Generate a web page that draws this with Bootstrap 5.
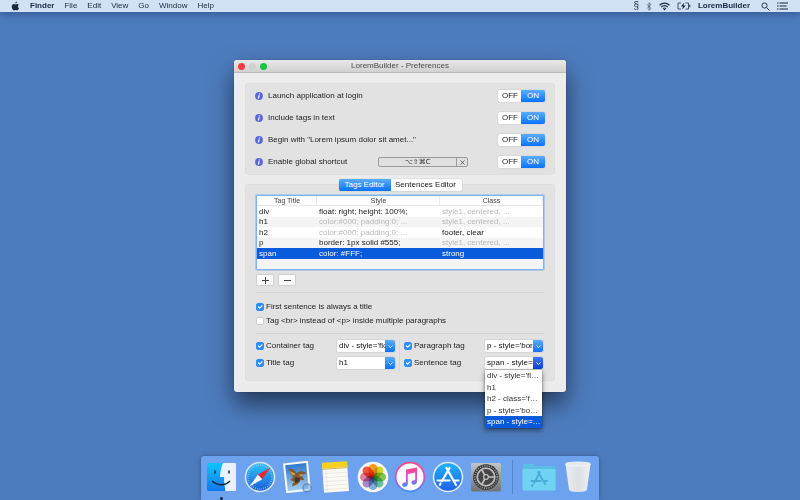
<!DOCTYPE html>
<html lang="en">
<head>
<meta charset="utf-8">
<meta name="viewport" content="width=device-width, initial-scale=1">
<title>LoremBuilder - Preferences</title>
<link rel="stylesheet" href="https://cdn.jsdelivr.net/npm/bootstrap@5.3.0/dist/css/bootstrap.min.css">
<style>
:root { --ink: #1c1c1c; --accent: #1a84fc; --pick: #0a5bdb; }
body { background: #4d7cbe; color: var(--ink); font-family: "Liberation Sans", Arial, sans-serif; font-size: 8px; line-height: 12px; }
.menubar { background: #d3e1f7; height: 12px; padding: 0 12px 0 11px; color: #1b2740; box-shadow: 0 1px 10px rgba(20,45,95,.55); }
.menubar a { color: inherit; text-decoration: none; }
.menus { gap: 10px; }
.status { gap: 7px; }
.section-mark { font-size: 10px; }
svg { display: block; flex: none; }

.prefs { max-width: 332px; margin-top: 48px; background: #ececec; border-radius: 3px; box-shadow: 0 12px 24px rgba(0,0,0,.55), 0 0 1px rgba(0,0,0,.5); }
.titlebar { display: grid; grid-template-columns: 1fr auto 1fr; align-items: center; height: 13px; padding: 0 4px; background: linear-gradient(#e8e8e8, #d1d1d1); border-bottom: 1px solid #b9b9b9; border-radius: 3px 3px 0 0; color: #4a4a4a; }
.light { width: 7px; height: 7px; border: 0; padding: 0; border-radius: 50%; }
.light-close { background: #fc3b47; }
.light-min { background: #d0d0d0; }
.light-zoom { background: #12ca40; }
.prefs-body { padding: 10px 11px 11px; }
.panel { background: #e2e2e2; border: 1px solid #dedede; border-radius: 3px; }
.options { padding: 1px 9px; }
.option { height: 22px; gap: 5px; }
.option-name { width: 105px; }

.seg { border-radius: 2px; box-shadow: 0 0 1px rgba(0,0,0,.45); }
.seg .btn { --bs-btn-font-size: 8px; --bs-btn-line-height: 12px; --bs-btn-padding-x: 0; --bs-btn-padding-y: 0; --bs-btn-border-width: 0; --bs-btn-border-radius: 2px; background: #fff; color: #222; text-align: center; }
.seg .btn-check:checked + .btn { background: linear-gradient(#5aaefc, #0b72ff); color: #fff; }
.seg-switch .btn { width: 24px; }
.tabs { margin-top: -6px; }
.tab-a { width: 52px; }
.tab-b { width: 72px; }

.shortcut { width: 90px; height: 10px; border: 1px solid #9b9b9b; border-radius: 2px; background: #e0e0e0; overflow: hidden; }
.shortcut input { min-width: 0; border: 0; padding: 0; background: none; text-align: center; font: 7px/8px "DejaVu Sans", sans-serif; color: #333; }
.shortcut button { width: 13px; border: 0; border-left: 1px solid #9b9b9b; padding: 0; background: none; display: grid; place-items: center; }

.editor { margin-top: 9px; padding: 0 10px 6px; }
.grid-box { margin-top: 4px; border: 1px solid #7fb3ee; border-radius: 1px; background: #f4f4f4; padding-bottom: 10px; box-shadow: 0 0 0 1px rgba(127,179,238,.5); }
.tags { width: 100%; table-layout: fixed; margin: 0; line-height: 10px; }
.tags th, .tags td { height: 10px; padding: 0 2px; border: 0; white-space: nowrap; overflow: hidden; }
.tags th { font-size: 7px; font-weight: 400; text-align: center; color: #444; background: #fff; box-shadow: inset -1px 0 #ececec, inset 0 -1px #e6e6e6; }
.tags tr:nth-child(odd) td { height: 11px; background: #fff; }
.tags tr:nth-child(even) td { background: #f4f4f4; }
.tags .hint { color: #b9b9b9; }
.tags tr.picked td { background: var(--pick); color: #fff; }
.c1 { width: 21%; }
.c2 { width: 43%; }

.tool { width: 18px; height: 12px; padding: 0; border: 1px solid #cfcfcf; border-radius: 1px; background: #fbfbfb; display: grid; place-items: center; }
.rule { height: 1px; background: #d3d3d3; }
.rule-a { margin: 6px 0 7px; }
.rule-b { margin-top: 5px; }
.line { height: 14px; }
.tick { gap: 2px; min-height: 0; padding: 0; margin: 0; }
.tick .form-check-input { float: none; flex: none; width: 8px; height: 8px; margin: 0; border: 1px solid #cfcfcf; border-radius: 2px; background-color: #fff; }
.tick .form-check-input:checked { background-color: #2c8ffb; border-color: #2c8ffb; background-size: 8px 8px; }
.pairs { gap: 9px; margin-top: 6px; padding-right: 1px; }
.pair-col { flex: 1 1 0; min-width: 0; }
.pair { height: 17px; }
.pair-col + .pair-col { position: relative; }
.pair-col + .pair-col::before { content: ""; position: absolute; left: -5px; top: 0; bottom: 2px; width: 1px; background: #d6d6d6; }
.combo { width: 58px; height: 12px; background: #fff; box-shadow: 0 0 1px rgba(0,0,0,.5); border-radius: 1px; position: relative; }
.combo select { appearance: none; width: 100%; height: 12px; border: 0; padding: 0 10px 0 2px; background: none; color: #111; font-size: 8px; line-height: 12px; text-overflow: clip; }
.combo .cap { position: absolute; right: 0; top: 0; width: 10px; height: 12px; display: grid; place-items: center; border-radius: 0 2px 2px 0; background: linear-gradient(#5aaefc, #0b72ff); pointer-events: none; }
.combo.is-open .cap { background: linear-gradient(#3d78f0, #0a45cf); }
.choices { position: absolute; z-index: 5; top: 13px; left: 0; right: 1px; background: #fff; box-shadow: 0 2px 5px rgba(0,0,0,.5), 0 0 1px rgba(0,0,0,.5); }
.choices button { height: 12px; padding: 0 2px; border: 0; background: #fff; color: #333; line-height: 12px; overflow: hidden; text-overflow: clip; white-space: nowrap; }
.choices button:nth-child(even) { height: 11px; line-height: 11px; }
.choices button.picked { background: var(--pick); color: #fff; }

.dock { max-width: 398px; height: 44px; padding: 0 5px 3px; background: #6da3ee; border-radius: 3px 3px 0 0; box-shadow: 0 0 4px rgba(30,60,110,.6); }
.dock a { position: relative; }
.dock .running::after { content: ""; position: absolute; left: 50%; bottom: -7px; width: 3px; height: 3px; margin-left: -2px; border-radius: 50%; background: #14233d; }
.dock-split { width: 1px; height: 34px; margin: 0 4px; background: #5586cc; }
.petals rect { mix-blend-mode: multiply; }
</style>
</head>
<body class="d-flex flex-column min-vh-100 overflow-x-hidden">

<header class="menubar d-flex justify-content-between align-items-center">
  <nav class="menus d-flex align-items-center" aria-label="Application menu">
    <a href="#" aria-label="System"><svg width="9" height="10" viewBox="0 0 18 20"><path fill="#1b2740" d="M12 1c0 2-1.500 4-3.500 4C8.300 3 10 1.200 12 1zM16 14.500c-1 2.500-2.300 4.500-4 4.500-1.200 0-1.600-.8-3-.8s-1.900.8-3 .8C3.500 19 1.500 14.500 1.500 11.200 1.500 8 3.500 6 5.800 6c1.300 0 2.300.8 3.200.8C9.800 6.800 11 6 12.600 6c1.200 0 2.400.6 3.100 1.700-2.700 1.600-2.300 5.700.3 6.800z"/></svg></a>
    <a href="#" class="fw-bold">Finder</a>
    <a href="#">File</a>
    <a href="#">Edit</a>
    <a href="#">View</a>
    <a href="#">Go</a>
    <a href="#">Window</a>
    <a href="#">Help</a>
  </nav>
  <div class="status d-flex align-items-center">
    <span class="section-mark">§</span>
    <svg width="6" height="9" viewBox="0 0 12 18" fill="none" stroke="#46536b" stroke-width="1.500"><path d="M2 5l8 8-4 3.500V1.500L10 5l-8 8"/></svg>
    <svg width="11" height="9" viewBox="0 0 22 18" fill="none" stroke="#1b2740" stroke-width="2.200"><path d="M1 6.500Q11-2 21 6.500M4.500 10Q11 4.500 17.500 10M8 13.200q3-2.500 6 0"/><path fill="#1b2740" stroke="none" d="M8.800 14.200h4.400L11 17z"/></svg>
    <svg width="14" height="8" viewBox="0 0 28 16" fill="none" stroke="#1b2740" stroke-width="1.500"><path d="M8 2H2v12h6M17 2h6v12h-6"/><path d="M25.500 5.500v5" stroke-width="2"/><path fill="#1b2740" stroke="none" d="M14.500 1L8 9h4l-1.500 6L17.500 7h-4.200z"/></svg>
    <a href="#" class="fw-bold">LoremBuilder</a>
    <svg class="ms-1" width="9" height="9" viewBox="0 0 18 18" fill="none" stroke="#1b2740" stroke-width="1.800"><circle cx="7" cy="7" r="5.200"/><path d="M11 11l6 6"/></svg>
    <svg width="11" height="8" viewBox="0 0 22 16" fill="none" stroke="#1b2740" stroke-width="2.200"><path d="M0 2h3M5 2h17M0 8h3M5 8h14M0 14h3M5 14h17"/></svg>
  </div>
</header>

<main class="flex-grow-1 d-flex flex-column align-items-center">
  <section class="prefs w-100" aria-label="Preferences">
    <div class="titlebar">
      <div class="d-flex gap-1">
        <button class="light light-close" type="button" aria-label="Close"></button>
        <button class="light light-min" type="button" aria-label="Minimize"></button>
        <button class="light light-zoom" type="button" aria-label="Zoom"></button>
      </div>
      <span>LoremBuilder - Preferences</span>
    </div>
    <div class="prefs-body">
      <div class="panel options">
        <div class="option d-flex align-items-center">
          <svg width="8" height="8" viewBox="0 0 16 16"><use href="#info"/></svg>
          <span class="option-name" id="o1">Launch application at login</span>
          <div class="seg seg-switch btn-group ms-auto" role="group" aria-labelledby="o1">
            <input class="btn-check" type="radio" name="login" id="login-off"><label class="btn" for="login-off">OFF</label>
            <input class="btn-check" type="radio" name="login" id="login-on" checked><label class="btn" for="login-on">ON</label>
          </div>
        </div>
        <div class="option d-flex align-items-center">
          <svg width="8" height="8" viewBox="0 0 16 16"><use href="#info"/></svg>
          <span class="option-name" id="o2">Include tags in text</span>
          <div class="seg seg-switch btn-group ms-auto" role="group" aria-labelledby="o2">
            <input class="btn-check" type="radio" name="tags" id="tags-off"><label class="btn" for="tags-off">OFF</label>
            <input class="btn-check" type="radio" name="tags" id="tags-on" checked><label class="btn" for="tags-on">ON</label>
          </div>
        </div>
        <div class="option d-flex align-items-center">
          <svg width="8" height="8" viewBox="0 0 16 16"><use href="#info"/></svg>
          <span class="text-nowrap" id="o3">Begin with "Lorem ipsum dolor sit amet..."</span>
          <div class="seg seg-switch btn-group ms-auto" role="group" aria-labelledby="o3">
            <input class="btn-check" type="radio" name="begin" id="begin-off"><label class="btn" for="begin-off">OFF</label>
            <input class="btn-check" type="radio" name="begin" id="begin-on" checked><label class="btn" for="begin-on">ON</label>
          </div>
        </div>
        <div class="option d-flex align-items-center">
          <svg width="8" height="8" viewBox="0 0 16 16"><use href="#info"/></svg>
          <label class="option-name" id="o4" for="keys">Enable global shortcut</label>
          <div class="shortcut d-flex">
            <input class="flex-grow-1" id="keys" type="text" value="⌥⇧⌘C">
            <button type="button" aria-label="Clear shortcut"><svg width="5" height="5" viewBox="0 0 10 10" stroke="#444" stroke-width="1.600"><path d="M1 1l8 8M9 1L1 9"/></svg></button>
          </div>
          <div class="seg seg-switch btn-group ms-auto" role="group" aria-labelledby="o4">
            <input class="btn-check" type="radio" name="short" id="short-off"><label class="btn" for="short-off">OFF</label>
            <input class="btn-check" type="radio" name="short" id="short-on" checked><label class="btn" for="short-on">ON</label>
          </div>
        </div>
      </div>

      <div class="panel editor">
        <div class="tabs d-flex justify-content-center">
          <div class="seg btn-group" role="group" aria-label="Editor">
            <input class="btn-check" type="radio" name="ed" id="ed-tags" checked><label class="btn tab-a" for="ed-tags">Tags Editor</label>
            <input class="btn-check" type="radio" name="ed" id="ed-sent"><label class="btn tab-b" for="ed-sent">Sentences Editor</label>
          </div>
        </div>
        <div class="grid-box">
          <table class="tags">
            <colgroup><col class="c1"><col class="c2"><col></colgroup>
            <thead><tr><th>Tag Title</th><th>Style</th><th>Class</th></tr></thead>
            <tbody>
              <tr><td>div</td><td>float: right; height: 100%;</td><td class="hint">style1, centered, ...</td></tr>
              <tr><td>h1</td><td class="hint">color:#000; padding:0; ...</td><td class="hint">style1, centered, ...</td></tr>
              <tr><td>h2</td><td class="hint">color:#000; padding:0; ...</td><td>footer, clear</td></tr>
              <tr><td>p</td><td>border: 1px solid #555;</td><td class="hint">style1, centered, ...</td></tr>
              <tr class="picked"><td>span</td><td>color: #FFF;</td><td>strong</td></tr>
            </tbody>
          </table>
        </div>
        <div class="d-flex gap-1 mt-1">
          <button class="tool" type="button" aria-label="Add tag"><svg width="7" height="7" viewBox="0 0 7 7" stroke="#444"><path d="M0 3.500h7M3.500 0v7"/></svg></button>
          <button class="tool" type="button" aria-label="Remove tag"><svg width="7" height="7" viewBox="0 0 7 7" stroke="#444"><path d="M0 3.500h7"/></svg></button>
        </div>
        <div class="rule rule-a"></div>
        <div class="line tick form-check d-flex align-items-center"><input class="form-check-input" type="checkbox" id="first" checked><label for="first">First sentence is always a title</label></div>
        <div class="line tick form-check d-flex align-items-center"><input class="form-check-input" type="checkbox" id="br"><label for="br">Tag &lt;br&gt; instead of &lt;p&gt; inside multiple paragraphs</label></div>
        <div class="rule rule-b"></div>
        <div class="pairs d-flex">
          <div class="pair-col">
            <div class="pair d-flex align-items-start justify-content-between">
              <div class="tick form-check d-flex align-items-center"><input class="form-check-input" type="checkbox" id="cont" checked><label for="cont">Container tag</label></div>
              <div class="combo"><select aria-label="Container tag value"><option>div - style='float: right; height: 100%;'</option></select><span class="cap"><svg width="5" height="3" viewBox="0 0 5 3"><use href="#chev"/></svg></span></div>
            </div>
            <div class="pair d-flex align-items-start justify-content-between">
              <div class="tick form-check d-flex align-items-center"><input class="form-check-input" type="checkbox" id="titl" checked><label for="titl">Title tag</label></div>
              <div class="combo"><select aria-label="Title tag value"><option>h1</option></select><span class="cap"><svg width="5" height="3" viewBox="0 0 5 3"><use href="#chev"/></svg></span></div>
            </div>
          </div>
          <div class="pair-col">
            <div class="pair d-flex align-items-start justify-content-between">
              <div class="tick form-check d-flex align-items-center"><input class="form-check-input" type="checkbox" id="para" checked><label for="para">Paragraph tag</label></div>
              <div class="combo"><select aria-label="Paragraph tag value"><option>p - style='border: 1px solid #555;'</option></select><span class="cap"><svg width="5" height="3" viewBox="0 0 5 3"><use href="#chev"/></svg></span></div>
            </div>
            <div class="pair d-flex align-items-start justify-content-between">
              <div class="tick form-check d-flex align-items-center"><input class="form-check-input" type="checkbox" id="sent" checked><label for="sent">Sentence tag</label></div>
              <div class="combo is-open"><select aria-label="Sentence tag value"><option>span - style='color: #FFF;'</option></select><span class="cap"><svg width="5" height="3" viewBox="0 0 5 3"><use href="#chev"/></svg></span>
                <div class="choices d-flex flex-column">
                  <button class="text-start" type="button">div - style='fl…</button>
                  <button class="text-start" type="button">h1</button>
                  <button class="text-start" type="button">h2 - class='f…</button>
                  <button class="text-start" type="button">p - style='bo…</button>
                  <button class="text-start picked" type="button">span - style=…</button>
                </div>
              </div>
            </div>
          </div>
        </div>
      </div>
    </div>
  </section>
</main>

<footer class="d-flex justify-content-center">
  <nav class="dock w-100 d-flex align-items-center justify-content-between" aria-label="Dock">
    <a class="running" href="#" aria-label="Finder"><svg width="32" height="32" viewBox="0 0 32 32"><defs><linearGradient id="f1" x2="0" y2="1"><stop stop-color="#10c5fb"/><stop offset="1" stop-color="#1278ee"/></linearGradient></defs><rect x="1" y="2" width="29" height="28" rx="1" fill="#e9f1fa"/><path fill="url(#f1)" d="M2 2h15c-2 5-3 9-3 14h4c0 5 .5 9 1.500 14H2a1 1 0 0 1-1-1V3a1 1 0 0 1 1-1z"/><path d="M9 9.500v3M23 9.500v3" stroke="#123" stroke-width="1.500"/><path d="M6 20c6 5 13 5 18 0" fill="none" stroke="#123" stroke-width="1.300"/></svg></a>
    <a href="#" aria-label="Safari"><svg width="32" height="32" viewBox="0 0 32 32"><defs><linearGradient id="s1" x2="0" y2="1"><stop stop-color="#2fc4f7"/><stop offset="1" stop-color="#1b5fd8"/></linearGradient></defs><circle cx="16" cy="16" r="15.300" fill="#dfe4ea"/><circle cx="16" cy="16" r="13.700" fill="url(#s1)"/><circle cx="16" cy="16" r="12" fill="none" stroke="#9fd3f8" stroke-width="1.600" stroke-dasharray=".6 1.500"/><path fill="#f3262c" d="M26.500 6.500L13.800 13.800l4.400 4.400z"/><path fill="#fff" d="M5.500 25.500l8.300-11.700 4.400 4.400z"/></svg></a>
    <a href="#" aria-label="Mail"><svg width="32" height="32" viewBox="0 0 32 32"><defs><linearGradient id="m1" x2="0" y2="1"><stop stop-color="#2f78cd"/><stop offset="1" stop-color="#a5cdeb"/></linearGradient></defs><g transform="rotate(-6 16 16)"><rect x="3.500" y="1" width="25" height="30" fill="#f7f7f5"/><rect x="5.500" y="3" width="21" height="26" fill="url(#m1)"/><path fill="#7d5a36" d="M8 7c4 0 7 2 8 5 3-2 6-2 10 1l-5 2 2 5-4-1-3 4-6 2 2-5-3-2 3-2z"/><path fill="#d8a552" d="M9 9l6 4-3 1zM18 14l5 0-3 2zM11 21l5-2-2 3z"/><path fill="#4a3523" d="M14 16l5 1-1 4-5 1z"/></g><circle cx="26" cy="27" r="4" fill="#5f8fd6" fill-opacity=".5" stroke="#4c78b5" stroke-width="1.500" opacity=".7"/></svg></a>
    <a href="#" aria-label="Notes"><svg width="32" height="32" viewBox="0 0 32 32"><g transform="rotate(-4 16 16)"><rect x="4" y="2" width="25" height="29" fill="#fbfaf5"/><path fill="#f8ce22" d="M4 1h25v6H4z"/><path d="M4 7.500h25" stroke="#c9a63a" stroke-width=".8"/><path d="M4 12h25M4 16h25M4 20h25M4 24h25M4 28h25M7.500 8v23" stroke="#e5e2d8" stroke-width=".7"/></g></svg></a>
    <a href="#" aria-label="Photos"><svg width="32" height="32" viewBox="0 0 32 32"><circle cx="16" cy="16" r="15.300" fill="#f6f5f3"/><g class="petals"><rect x="11.700" y="3" width="8.600" height="13" rx="4.300" fill="#fba21c"/><rect x="11.700" y="3" width="8.600" height="13" rx="4.300" fill="#d8dc2a" transform="rotate(45 16 16)"/><rect x="11.700" y="3" width="8.600" height="13" rx="4.300" fill="#86cc58" transform="rotate(90 16 16)"/><rect x="11.700" y="3" width="8.600" height="13" rx="4.300" fill="#6cc8ac" transform="rotate(135 16 16)"/><rect x="11.700" y="3" width="8.600" height="13" rx="4.300" fill="#86b4e2" transform="rotate(180 16 16)"/><rect x="11.700" y="3" width="8.600" height="13" rx="4.300" fill="#b48cd0" transform="rotate(225 16 16)"/><rect x="11.700" y="3" width="8.600" height="13" rx="4.300" fill="#e583a8" transform="rotate(270 16 16)"/><rect x="11.700" y="3" width="8.600" height="13" rx="4.300" fill="#f55a44" transform="rotate(315 16 16)"/></g></svg></a>
    <a href="#" aria-label="iTunes"><svg width="32" height="32" viewBox="0 0 32 32"><defs><linearGradient id="i1" x2="0" y2="1"><stop stop-color="#fb4a7c"/><stop offset=".5" stop-color="#e04ad4"/><stop offset="1" stop-color="#3c8ff8"/></linearGradient></defs><circle cx="16" cy="16" r="14.400" fill="#fbfafd" stroke="url(#i1)" stroke-width="1.800"/><path fill="url(#i1)" d="M12 8.500l11-2v14.300c0 3.400-5.500 4-5.500 1 0-2.600 3-2.200 3.700-3v-7.300l-7.400 1.400v10c0 3.400-5.600 4-5.600 1 0-2.600 3.200-2.200 3.800-3z"/></svg></a>
    <a href="#" aria-label="App Store"><svg width="32" height="32" viewBox="0 0 32 32"><defs><linearGradient id="a1" x2="0" y2="1"><stop stop-color="#1fb2f8"/><stop offset="1" stop-color="#1f62ea"/></linearGradient></defs><circle cx="16" cy="16" r="15.300" fill="#dfe8f4"/><circle cx="16" cy="16" r="13.700" fill="url(#a1)"/><g fill="none" stroke="#fff" stroke-width="2.200" stroke-linecap="round"><path d="M17.500 7L10 20M8.500 22.500L7.800 24M14.500 7l9.500 17M5.500 19.500h12M22.500 19.500h4"/></g></svg></a>
    <a href="#" aria-label="System Preferences"><svg width="32" height="32" viewBox="0 0 32 32"><defs><linearGradient id="p1" x2="0" y2="1"><stop stop-color="#c2c5c7"/><stop offset="1" stop-color="#6f7376"/></linearGradient></defs><rect x="1" y="2" width="30" height="28.500" rx="1.500" fill="url(#p1)"/><circle cx="16" cy="16" r="12.800" fill="#303030"/><circle cx="16" cy="16" r="11.200" fill="none" stroke="#969696" stroke-width="1.800" stroke-dasharray="1.200 1.100"/><circle cx="16" cy="16" r="8.800" fill="#454545" stroke="#bdbdbd" stroke-width="1.800"/><path d="M16 16h8.500M16 16l-4.300-7.400M16 16l-4.300 7.400" stroke="#c4c4c4" stroke-width="1.700"/><circle cx="16" cy="16" r="2.300" fill="#333" stroke="#c4c4c4" stroke-width="1.300"/></svg></a>
    <span class="dock-split"></span>
    <a href="#" aria-label="Applications"><svg width="34" height="32" viewBox="0 0 34 32"><path fill="#58bfe6" d="M1 4.500q0-1.500 1.500-1.500h9l2 2H32q1.500 0 1.500 1.500V28H1z"/><path fill="#70d3f4" d="M.5 8h33v20.500q0 1-1 1h-31q-1 0-1-1z"/><g fill="none" stroke="#48acd4" stroke-width="1.800" stroke-linecap="round"><path d="M18 11l-6 11M16 11l7 12M9.500 20h9M22.500 20h2.500M10.500 24l-.5 1"/></g></svg></a>
    <a href="#" aria-label="Trash"><svg width="32" height="32" viewBox="0 0 32 32"><defs><linearGradient id="t1"><stop stop-color="#eceef1"/><stop offset=".5" stop-color="#dcdfe3"/><stop offset="1" stop-color="#eef0f3"/></linearGradient></defs><path fill="url(#t1)" d="M3.500 3h25l-3.500 25.500q-.5 2.500-9 2.500t-9-2.500z"/><ellipse cx="16" cy="3" rx="12.500" ry="2" fill="#e6e8eb" stroke="#f7f8fa" stroke-width=".8"/></svg></a>
  </nav>
</footer>

<svg class="d-none" aria-hidden="true">
  <defs>
    <g id="info"><circle cx="8" cy="8" r="7.800" fill="#5a67dc"/><path fill="#fff" d="M8 2.800h2.200l-.5 2.200H7.500zM7 6.500h2.500L8 13H5.500z"/></g>
    <path id="chev" d="M.5 .5l2 2 2-2" fill="none" stroke="#fff"/>
  </defs>
</svg>
<script src="https://cdn.jsdelivr.net/npm/bootstrap@5.3.0/dist/js/bootstrap.bundle.min.js"></script>
</body>
</html>
